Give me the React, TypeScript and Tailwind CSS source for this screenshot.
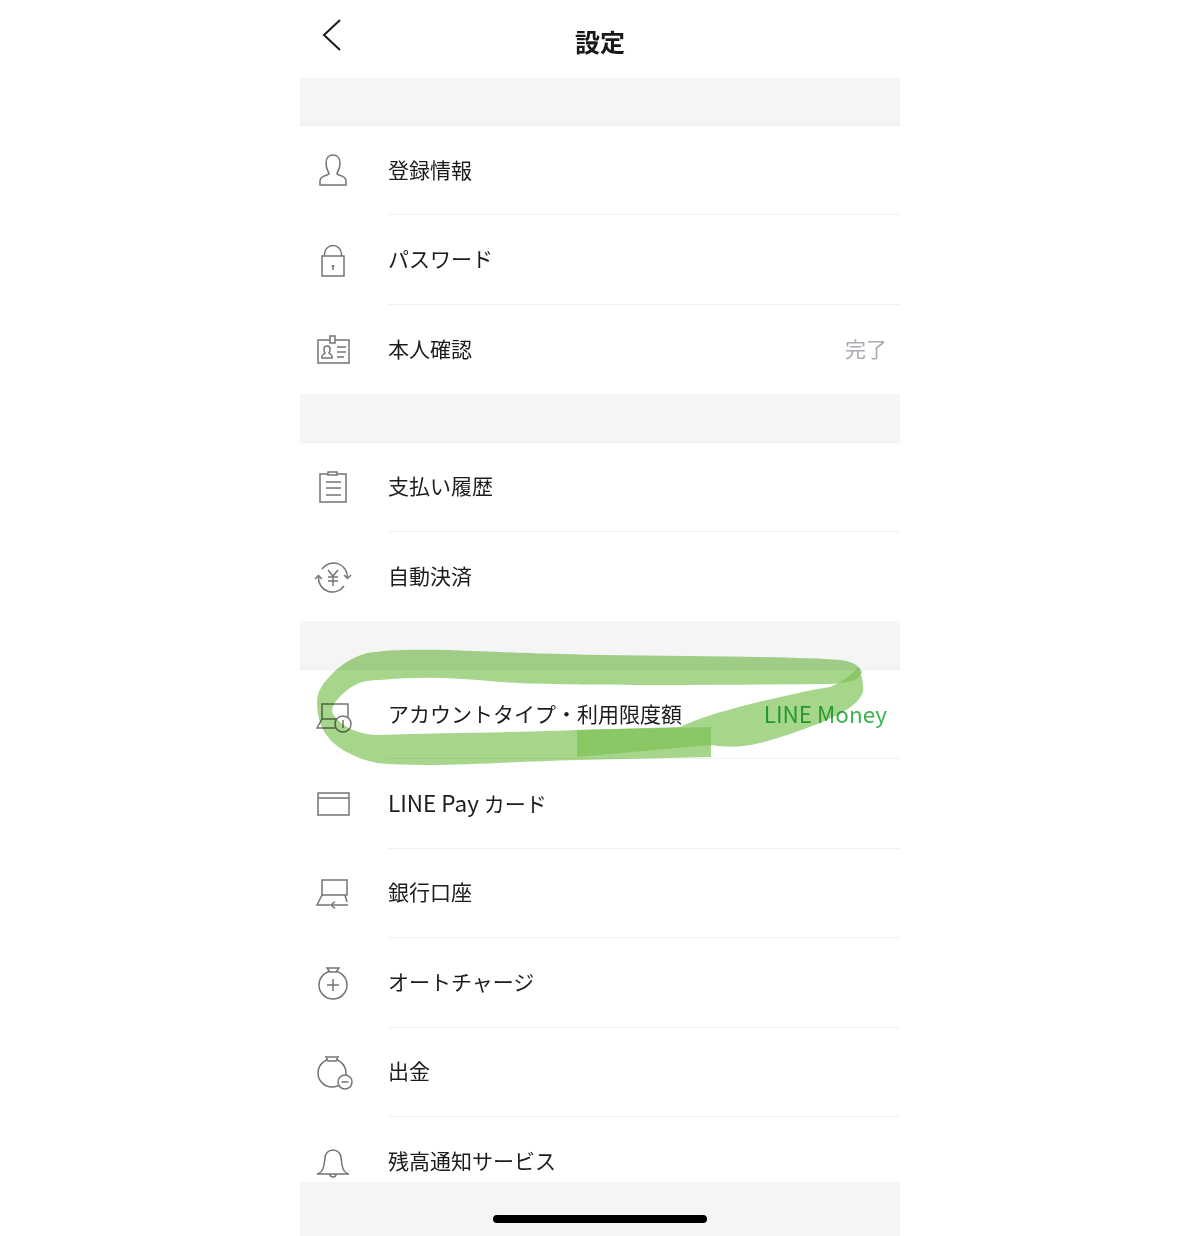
import React from 'react';

const iconProps = {
  viewBox: '0 0 36 36',
  fill: 'none',
  stroke: '#747474',
  strokeWidth: 1.5,
  className: 'w-9 h-9 overflow-visible',
};

const UserIcon = () => (
  <svg {...iconProps}>
    <path d="M5 32v-4c0-3 3-5 7-6l2-1c0-2-3-4-3-11c0-5 3-8 7-8s7 3 7 8c0 7-3 9-3 11l2 1c4 1 7 3 7 6v4z" />
  </svg>
);

const LockIcon = () => (
  <svg {...iconProps}>
    <path d="M9.5 14v-2a8.5 8.5 0 0 1 17 0v2" />
    <rect x="7" y="14" width="22" height="20" />
    <path d="M18 24v4M16.5 24h3" />
  </svg>
);

const IdIcon = () => (
  <svg {...iconProps}>
    <rect x="3" y="9" width="31" height="23" />
    <rect x="15" y="5" width="5" height="7" fill="#ffffff" />
    <path d="M7 27v-2c0-1 2-2 3-3c-1-1-1-2-1-4c0-2 1-3 3-3s3 1 3 3c0 2 0 3-1 4c1 1 3 2 3 3v2z" />
    <path d="M22 16h9M22 21h9M22 26h7" />
  </svg>
);

const ClipboardIcon = () => (
  <svg {...iconProps}>
    <rect x="5" y="5" width="26" height="28" />
    <rect x="13" y="3" width="9" height="3" fill="#ffffff" />
    <path d="M11 13h15M11 19h15M11 26h15" />
  </svg>
);

const YenCycleIcon = () => (
  <svg {...iconProps}>
    <path d="M7 10A14 14 0 0 1 32.5 18M29 16l3.5 3.5L36 16" />
    <path d="M29 27A14 14 0 0 1 3.5 18M0 20l3.5-3.5L7 20" />
    <path d="M13 11l5 6l5-6M18 17v10M13 18h10M13 22h10" />
  </svg>
);

const AccountIcon = () => (
  <svg {...iconProps}>
    <path d="M7 22V7h26v15zM7 22L2 31h22" />
    <circle cx="28" cy="27" r="8" fill="#ffffff" />
    <path d="M28 23v8" />
  </svg>
);

const CardIcon = () => (
  <svg {...iconProps}>
    <rect x="3" y="7" width="31" height="22" />
    <path d="M3 12h31" />
  </svg>
);

const BankIcon = () => (
  <svg {...iconProps}>
    <rect x="7" y="5" width="25" height="15" />
    <path d="M7 20L2 30h13M30 20l2 7" />
    <path d="M33 30H16M20 26.5L16 30l4 3.5" />
  </svg>
);

const ChargeIcon = () => (
  <svg {...iconProps}>
    <circle cx="18" cy="20" r="14" />
    <path d="M12 3h12l-3 4h-6z" fill="#ffffff" />
    <path d="M18 14v12M12 20h12" />
  </svg>
);

const WithdrawIcon = () => (
  <svg {...iconProps}>
    <circle cx="17" cy="19" r="14" />
    <path d="M11 3h12l-2 4h-8z" fill="#ffffff" />
    <circle cx="30" cy="28" r="7" fill="#ffffff" />
    <path d="M26.5 28h7" />
  </svg>
);

const BellIcon = () => (
  <svg {...iconProps}>
    <path d="M2 30c4-1 6-3 7-9l1-7a8 8 0 0 1 16 0l1 7c1 6 3 8 7 9z" />
    <path d="M15 30c0 4 6 4 6 0" />
  </svg>
);

interface SettingRow {
  label: React.ReactNode;
  icon: React.ReactNode;
  value?: string;
  valueClass?: string;
}

const groups: SettingRow[][] = [
  [
    { label: '登録情報', icon: <UserIcon /> },
    { label: 'パスワード', icon: <LockIcon /> },
    { label: '本人確認', icon: <IdIcon />, value: '完了', valueClass: 'text-[21px] text-[#a9adb3]' },
  ],
  [
    { label: '支払い履歴', icon: <ClipboardIcon /> },
    { label: '自動決済', icon: <YenCycleIcon /> },
  ],
  [
    {
      label: 'アカウントタイプ・利用限度額',
      icon: <AccountIcon />,
      value: 'LINE Money',
      valueClass: 'text-[22.5px] text-[#3db552]',
    },
    {
      label: (
        <>
          <span className="text-[22.5px]">LINE Pay</span> カード
        </>
      ),
      icon: <CardIcon />,
    },
    { label: '銀行口座', icon: <BankIcon /> },
    { label: 'オートチャージ', icon: <ChargeIcon /> },
    { label: '出金', icon: <WithdrawIcon /> },
    { label: '残高通知サービス', icon: <BellIcon /> },
  ],
];

const Row: React.FC<{ row: SettingRow; last: boolean }> = ({ row, last }) => (
  <div className="flex h-[89.4px] shrink-0 items-center">
    <div className="flex w-[88px] shrink-0 pl-[15px]">{row.icon}</div>
    <div
      className={`flex h-full flex-1 items-center justify-between pb-[2px] pr-[13px] ${
        last ? '' : 'border-b border-[#f0f0f0]'
      }`}
    >
      <span className="text-[21px] leading-none text-[#1c1c1c]">{row.label}</span>
      {row.value && <span className={`leading-none ${row.valueClass}`}>{row.value}</span>}
    </div>
  </div>
);

export default function App() {
  return (
    <div className="relative h-[1236px] w-full overflow-hidden bg-white font-['Noto_Sans_CJK_JP','Noto_Sans',sans-serif]">
      <div className="mx-auto flex h-full w-[600px] flex-col">
        <header className="grid h-[77.5px] shrink-0 grid-cols-[1fr_auto_1fr] items-start">
          <svg viewBox="0 0 20 32" fill="none" stroke="#1a1a1a" strokeWidth="2" className="ml-[22px] mt-[19px] h-8 w-5">
            <path d="M18 1L2 16l16 15" />
          </svg>
          <h1 className="mt-[26px] text-[25px] font-bold leading-[30px] text-[#1a1a1a]">設定</h1>
        </header>

        <div className="min-h-0 flex-1 overflow-hidden">
          {groups.map((group, i) => (
            <section key={i}>
              <div className="h-[48.5px] border-b border-[#f0f0f0] bg-[#f5f5f5]" />
              {group.map((row, j) => (
                <Row key={j} row={row} last={j === group.length - 1} />
              ))}
            </section>
          ))}
        </div>

        <footer className="flex h-[54px] shrink-0 justify-center bg-[#f5f5f5] pt-[33px]">
          <div className="h-2 w-[214px] rounded-full bg-black" />
        </footer>
      </div>

      {/* hand drawn highlight on top of the screenshot */}
      <svg
        viewBox="0 0 1200 1236"
        className="pointer-events-none absolute left-0 top-0 h-[1236px] w-[1200px] mix-blend-multiply"
      >
        <g fill="#7cc354" fillOpacity="0.68">
          <path d="M711 727L577 730C500 733 440 733 380 735C360 735 342 728 333 714C330 708 336 698 350 688C358 682 368 680 380 680C420 676 460 678 500 682C560 686 700 685 830 684C850 683 860 680 862 672C860 665 850 661 840 660C800 657 700 656 600 655C540 654 500 652 450 650C410 649 385 650 367 653C350 658 340 666 333 673C322 684 317 692 317 702C317 715 320 727 328 737C335 746 350 757 377 763C430 768 500 762 577 760L711 757Z" />
          <path d="M858 667C862 675 864 685 863 692C860 702 845 712 833 717C815 726 780 738 760 743C740 748 725 747 711 745L577 757L577 730L680 727C695 720 705 717 717 713C735 708 750 704 767 700C790 695 810 690 830 687C842 682 852 675 858 667Z" />
        </g>
      </svg>
    </div>
  );
}
